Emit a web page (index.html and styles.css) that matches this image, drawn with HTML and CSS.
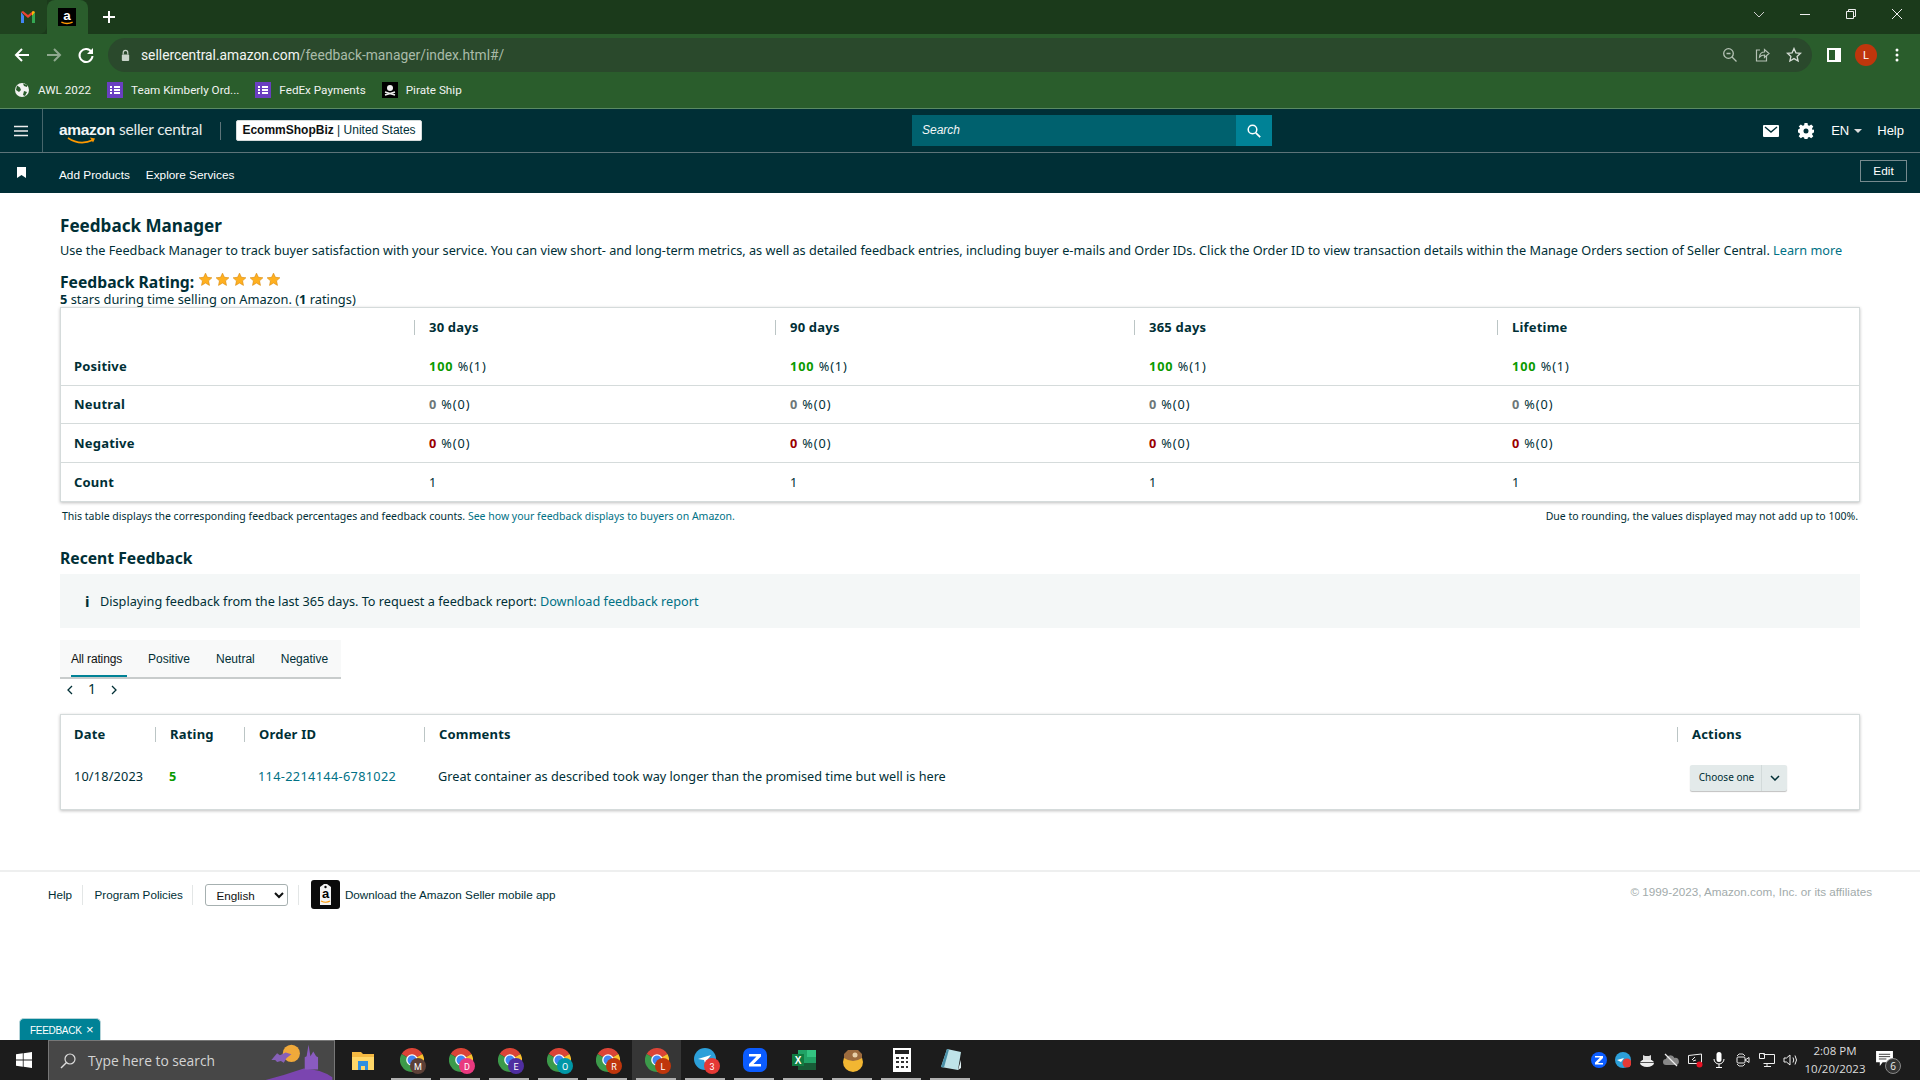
FILE: index.html
```html
<!DOCTYPE html>
<html lang="en">
<head>
<meta charset="utf-8">
<title>Feedback Manager</title>
<link rel="stylesheet" href="styles.css">
</head>
<body>
<svg class="defs" width="0" height="0">
  <symbol id="chrome" viewBox="0 0 24 24">
    <path d="M12 12L1.6 6A12 12 0 0 1 22.4 6Z" fill="#db4437"/>
    <path d="M12 12L22.4 6A12 12 0 0 1 12 24Z" fill="#fbc02d"/>
    <path d="M12 12L12 24A12 12 0 0 1 1.6 6Z" fill="#3c9a4a"/>
    <circle cx="12" cy="12" r="5.8" fill="#fff"/>
    <circle cx="12" cy="12" r="4.5" fill="#4285f4"/>
  </symbol>
  <symbol id="listicon" viewBox="0 0 16 16">
    <rect width="16" height="16" fill="#6a3fc0"/>
    <path d="M3 4h2v2H3zM7 4h6v2H7zM3 7h2v2H3zM7 7h6v2H7zM3 10h2v2H3zM7 10h6v2H7z" fill="#fff"/>
  </symbol>
  <symbol id="star" viewBox="-2 -1 24 22">
    <path d="M10 1l2.7 5.900 6.300.7-4.700 4.300 1.300 6.400L10 15l-5.600 3.300 1.300-6.400L1 7.600l6.300-.7z" fill="#ffb01f" stroke="#d98a10" stroke-width=".9"/>
  </symbol>
</svg>

<div class="tabbar">
  <div class="tab-inactive">
    <svg class="ico16" viewBox="0 0 16 16"><path d="M1 3v11h3V7z" fill="#4285f4"/><path d="M15 3v11h-3V7z" fill="#34a853"/><path d="M1 3l7 6 7-6-2-1-5 4-5-4z" fill="#ea4335"/><path d="M12 7l3-4-2-1-1 1z" fill="#fbbc04"/></svg>
  </div>
  <div class="tab-active">
    <svg class="ico16" viewBox="0 0 16 16"><rect width="16" height="16" fill="#000"/><text x="8" y="10.500" class="fav-a">a</text><path d="M3 12.500q5 2.500 10 0" fill="none" stroke="#f90" stroke-width="1.200"/></svg>
  </div>
  <div class="tab-plus">
    <svg class="ico14" viewBox="0 0 14 14"><path d="M7 1v12M1 7h12" stroke="#fff" stroke-width="2"/></svg>
  </div>
  <div class="win-controls">
    <svg class="ico12" viewBox="0 0 12 12"><path d="M1 4l5 5 5-5" fill="none" stroke="#ccc"/></svg>
    <svg class="ico12" viewBox="0 0 12 12"><path d="M1 6.500h10" stroke="#eee"/></svg>
    <svg class="ico12" viewBox="0 0 12 12"><path d="M1.500 3.500h7v7h-7zM3.500 3.500v-2h7v7h-2" fill="none" stroke="#eee"/></svg>
    <svg class="ico12" viewBox="0 0 12 12"><path d="M1 1l10 10M11 1L1 11" stroke="#eee"/></svg>
  </div>
</div>

<div class="toolbar">
  <svg class="tool-btn" viewBox="0 0 18 18"><path d="M16 9H3M9 3L3 9l6 6" fill="none" stroke="#fff" stroke-width="2"/></svg>
  <svg class="tool-btn" viewBox="0 0 18 18"><path d="M2 9h13M9 3l6 6-6 6" fill="none" stroke="#8fa98f" stroke-width="2"/></svg>
  <svg class="tool-btn" viewBox="0 0 18 18"><path d="M14.500 6A6.500 6.500 0 1 0 15.500 10" fill="none" stroke="#fff" stroke-width="2"/><path d="M16 2v6h-6z" fill="#fff"/></svg>
  <div class="omnibox">
    <svg class="lock" viewBox="0 0 12 14"><path d="M3.500 6V4a2.500 2.500 0 0 1 5 0v2" fill="none" stroke="#c9d3c9" stroke-width="1.300"/><rect x="2" y="6" width="8" height="7" rx="1" fill="#c9d3c9"/></svg>
    <span class="url"><span class="url-host">sellercentral.amazon.com</span>/feedback-manager/index.html#/</span>
    <div class="omni-icons">
      <svg class="ico16" viewBox="0 0 16 16"><circle cx="6.500" cy="6.500" r="4.800" fill="none" stroke="#b5c2b5" stroke-width="1.300"/><path d="M10 10l4.500 4.500M4.500 6.500h4" stroke="#b5c2b5" stroke-width="1.300"/></svg>
      <svg class="ico16" viewBox="0 0 16 16"><path d="M6 3H2.500v11h10V9" fill="none" stroke="#b5c2b5" stroke-width="1.200"/><path d="M5.500 10q.5-5 5-5V2.500L15 6.500l-4.500 4V8q-3 0-5 2z" fill="none" stroke="#b5c2b5" stroke-width="1.200"/></svg>
      <svg class="ico16" viewBox="0 0 16 16"><path d="M8 1.500l1.900 4.300 4.600.5-3.400 3.100 1 4.600L8 11.600l-4.100 2.400 1-4.600L1.500 6.300l4.600-.5z" fill="none" stroke="#d5ddd5" stroke-width="1.300"/></svg>
    </div>
  </div>
  <div class="tool-right">
    <svg class="ico16" viewBox="0 0 16 16"><rect x="1" y="1" width="14" height="14" fill="#fff"/><rect x="3" y="3" width="6" height="10" fill="#2a5d2c"/></svg>
    <span class="avatar">L</span>
    <svg class="ico16" viewBox="0 0 16 16"><circle cx="8" cy="3" r="1.500" fill="#fff"/><circle cx="8" cy="8" r="1.500" fill="#fff"/><circle cx="8" cy="13" r="1.500" fill="#fff"/></svg>
  </div>
</div>

<div class="bookmarks">
  <span class="bm"><svg class="ico16" viewBox="0 0 16 16"><circle cx="8" cy="8" r="7" fill="#f1f1f1"/><path d="M3 3.500l3 2 1 2.500-2 2-3-2zM9 1.500l1 2.500 3 1v-2zM10 9l3 1-2 4-2-1z" fill="#2a5d2c"/></svg>AWL 2022</span>
  <span class="bm"><svg class="ico16"><use href="#listicon"/></svg>Team Kimberly Ord...</span>
  <span class="bm"><svg class="ico16"><use href="#listicon"/></svg>FedEx Payments</span>
  <span class="bm"><svg class="ico16" viewBox="0 0 16 16"><rect width="16" height="16" fill="#000"/><circle cx="8" cy="6" r="3" fill="#eee"/><path d="M3 10l10 3M13 10L3 13" stroke="#eee" stroke-width="1.500"/></svg>Pirate Ship</span>
</div>

<header class="sc-header">
  <div class="burger-cell">
    <svg class="ico14" viewBox="0 0 14 14"><path d="M0 2.500h14M0 7h14M0 11.500h14" stroke="#eee" stroke-width="1.600"/></svg>
  </div>
  <div class="logo">
    <span class="logo-amazon">amazon</span>
    <span class="logo-sc">seller central</span>
    <svg class="logo-smile" viewBox="0 0 30 8"><path d="M1 1q12 8 25 2" fill="none" stroke="#f90" stroke-width="1.600"/><path d="M23 .5l5 1-2 4z" fill="#f90"/></svg>
  </div>
  <div class="vsep"></div>
  <div class="acct-badge"><b>EcommShopBiz</b> | United States</div>
  <div class="hdr-search">
    <span class="hdr-search-input">Search</span>
    <span class="hdr-search-btn"><svg class="ico14" viewBox="0 0 14 14"><circle cx="5.500" cy="5.500" r="4.300" fill="none" stroke="#fff" stroke-width="1.500"/><path d="M8.800 8.800l4.400 4.400" stroke="#fff" stroke-width="1.700"/></svg></span>
  </div>
  <div class="hdr-right">
    <svg class="ico16" viewBox="0 0 16 16"><rect y="2" width="16" height="12" rx="1" fill="#fff"/><path d="M2 4l6 5 6-5" fill="none" stroke="#002f36" stroke-width="1.400"/></svg>
    <svg class="ico16" viewBox="0 0 16 16"><path d="M8 5.500A2.500 2.500 0 1 0 8 10.500 2.500 2.500 0 1 0 8 5.500ZM6.500 0h3l.4 2.200 1.400.6L13.200 1.500l2.100 2.100L14 5.500l.6 1.400L16 6.500v3l-1.400.4-.6 1.400 1.300 1.900-2.100 2.100-1.900-1.300-1.400.6L9.500 16h-3l-.4-1.400-1.400-.6-1.900 1.300-2.100-2.100L2 11.300l-.6-1.400L0 9.500v-3l1.400-.4.600-1.400L.700 3.600 2.800 1.500l1.900 1.300 1.400-.6z" fill="#fff" fill-rule="evenodd"/></svg>
    <span class="lang">EN<i class="caret"></i></span>
    <span class="hdr-help">Help</span>
  </div>
</header>

<nav class="sc-nav">
  <svg class="nav-flag" viewBox="0 0 9 11"><path d="M0 0h9v11L4.500 8 0 11z" fill="#fff"/></svg>
  <a class="nav-link">Add Products</a>
  <a class="nav-link">Explore Services</a>
  <span class="nav-edit">Edit</span>
</nav>

<main class="page">
  <h1 class="title">Feedback Manager</h1>
  <p class="intro">Use the Feedback Manager to track buyer satisfaction with your service. You can view short- and long-term metrics, as well as detailed feedback entries, including buyer e-mails and Order IDs. Click the Order ID to view transaction details within the Manage Orders section of Seller Central. <a class="link">Learn more</a></p>
  <h2 class="rating-title">Feedback Rating:<span class="stars"><svg class="star"><use href="#star"/></svg><svg class="star"><use href="#star"/></svg><svg class="star"><use href="#star"/></svg><svg class="star"><use href="#star"/></svg><svg class="star"><use href="#star"/></svg></span></h2>
  <p class="rating-sub"><b>5</b> stars during time selling on Amazon. (<b>1</b> ratings)</p>

  <div class="card">
    <table class="tbl tbl-metrics">
      <thead><tr><th></th><th><span>30 days</span></th><th><span>90 days</span></th><th><span>365 days</span></th><th><span>Lifetime</span></th></tr></thead>
      <tbody>
        <tr><th class="rowhead">Positive</th><td><b class="pos">100</b> %(1)</td><td><b class="pos">100</b> %(1)</td><td><b class="pos">100</b> %(1)</td><td><b class="pos">100</b> %(1)</td></tr>
        <tr><th class="rowhead">Neutral</th><td><b class="neu">0</b> %(0)</td><td><b class="neu">0</b> %(0)</td><td><b class="neu">0</b> %(0)</td><td><b class="neu">0</b> %(0)</td></tr>
        <tr><th class="rowhead">Negative</th><td><b class="neg">0</b> %(0)</td><td><b class="neg">0</b> %(0)</td><td><b class="neg">0</b> %(0)</td><td><b class="neg">0</b> %(0)</td></tr>
        <tr><th class="rowhead">Count</th><td>1</td><td>1</td><td>1</td><td>1</td></tr>
      </tbody>
    </table>
  </div>
  <div class="table-note">
    <span>This table displays the corresponding feedback percentages and feedback counts. <a class="link">See how your feedback displays to buyers on Amazon.</a></span>
    <span>Due to rounding, the values displayed may not add up to 100%.</span>
  </div>

  <h2 class="recent-title">Recent Feedback</h2>
  <div class="info-box"><i class="info-i">i</i>Displaying feedback from the last 365 days. To request a feedback report:&nbsp;<a class="link">Download feedback report</a></div>

  <div class="tabs">
    <span class="tab tab-on">All ratings</span>
    <span class="tab">Positive</span>
    <span class="tab">Neutral</span>
    <span class="tab">Negative</span>
  </div>
  <div class="pager">
    <svg class="chev" viewBox="0 0 8 10"><path d="M6 1L2 5l4 4" fill="none" stroke="#002f36" stroke-width="1.300"/></svg>
    <span class="pager-num">1</span>
    <svg class="chev" viewBox="0 0 8 10"><path d="M2 1l4 4-4 4" fill="none" stroke="#002f36" stroke-width="1.300"/></svg>
  </div>

  <div class="card">
    <table class="tbl tbl-recent">
      <thead><tr><th class="first">Date</th><th><span>Rating</span></th><th><span>Order ID</span></th><th><span>Comments</span></th><th><span>Actions</span></th></tr></thead>
      <tbody>
        <tr>
          <td class="first date-cell">10/18/2023</td>
          <td class="rating-cell"><b class="pos">5</b></td>
          <td><a class="link order-id">114-2214144-6781022</a></td>
          <td>Great container as described took way longer than the promised time but well is here</td>
          <td class="action-cell"><span class="choose"><span class="choose-label">Choose one</span><span class="choose-arrow"><svg class="chev-d" viewBox="0 0 10 6"><path d="M1 1l4 4 4-4" fill="none" stroke="#002f36" stroke-width="1.500"/></svg></span></span></td>
        </tr>
      </tbody>
    </table>
  </div>
</main>

<footer class="sc-footer">
  <a class="foot-link">Help</a>
  <span class="foot-sep"></span>
  <a class="foot-link">Program Policies</a>
  <span class="foot-sep"></span>
  <select class="foot-select"><option>English</option></select>
  <span class="foot-sep"></span>
  <span class="foot-app"><svg class="app-icon" viewBox="0 0 29 29"><rect width="29" height="29" rx="3" fill="#0b0b0b"/><path d="M9 7l4-3h3l4 3v18H9z" fill="#f4f4f4"/><circle cx="14.500" cy="7" r="1.200" fill="#0b0b0b"/><text x="14.500" y="18" class="app-a">a</text><path d="M10 21q5 2.500 9 0" fill="none" stroke="#f90" stroke-width="1.100"/></svg>Download the Amazon Seller mobile app</span>
  <span class="copyright">© 1999-2023, Amazon.com, Inc. or its affiliates</span>
</footer>

<div class="feedback-tab">FEEDBACK <span class="feedback-x">×</span></div>

<div class="taskbar">
  <div class="start"><svg class="ico16" viewBox="0 0 16 16"><path d="M0 2.300l6.800-1v6.200H0zM7.600 1.200L16 0v7.500H7.600zM0 8.400h6.800v6.300L0 13.700zM7.600 8.400H16V16l-8.400-1.200z" fill="#fff"/></svg></div>
  <div class="win-search">
    <svg class="ico16" viewBox="0 0 16 16"><circle cx="10" cy="6" r="5" fill="none" stroke="#ddd" stroke-width="1.200"/><path d="M6.500 9.500L1 15" stroke="#ddd" stroke-width="1.400"/></svg>
    <span class="win-search-text">Type here to search</span>
    <svg class="halloween" viewBox="0 0 70 42"><path d="M0 42Q20 37 40 30Q58 31 70 39V42z" fill="#7b45b0"/><path d="M41 31V18l2-1 2-12 2 12 3-5 3 5 2 1v13z" fill="#8a5bc0"/><circle cx="27" cy="14" r="9" fill="#f0a93a"/><path d="M6 21l6-7 3 2 6-3 6 2-5 4-3 5-3-2-4 1-2-2z" fill="#8660b8"/></svg>
  </div>
  <div class="tb-apps">
    <span class="tb-app"><svg class="tb-ico" viewBox="0 0 24 24"><path d="M1 4h9l2 2h11v16H1z" fill="#f4b942"/><path d="M1 9h22v13H1z" fill="#ffd768"/><path d="M7 13h10v9h-3v-4h-4v4H7z" fill="#2f8fe0"/></svg></span>
    <span class="tb-app tb-run"><svg class="tb-ico tb-over"><use href="#chrome"/><circle cx="18" cy="18" r="8" fill="#5d4037"/><text x="18" y="21.500" class="tb-badge">M</text></svg></span>
    <span class="tb-app tb-run"><svg class="tb-ico tb-over"><use href="#chrome"/><circle cx="18" cy="18" r="8" fill="#e9397f"/><text x="18" y="21.500" class="tb-badge">D</text></svg></span>
    <span class="tb-app tb-run"><svg class="tb-ico tb-over"><use href="#chrome"/><circle cx="18" cy="18" r="8" fill="#4f2ea0"/><text x="18" y="21.500" class="tb-badge">E</text></svg></span>
    <span class="tb-app tb-run"><svg class="tb-ico tb-over"><use href="#chrome"/><circle cx="18" cy="18" r="8" fill="#0097a7"/><text x="18" y="21.500" class="tb-badge">O</text></svg></span>
    <span class="tb-app tb-run"><svg class="tb-ico tb-over"><use href="#chrome"/><circle cx="18" cy="18" r="8" fill="#bf360c"/><text x="18" y="21.500" class="tb-badge">R</text></svg></span>
    <span class="tb-app tb-run tb-active"><svg class="tb-ico tb-over"><use href="#chrome"/><circle cx="18" cy="18" r="8" fill="#bf360c"/><text x="18" y="21.500" class="tb-badge">L</text></svg></span>
    <span class="tb-app tb-run"><svg class="tb-ico tb-over" viewBox="0 0 24 24"><circle cx="11" cy="11" r="11" fill="#2c9fd9"/><path d="M4 11l13-4-6 8-1-3z" fill="#fff"/><circle cx="18" cy="18" r="8" fill="#e53935"/><text x="18" y="21.500" class="tb-badge">3</text></svg></span>
    <span class="tb-app tb-run"><svg class="tb-ico" viewBox="0 0 24 24"><rect width="24" height="24" rx="7" fill="#0b5cff"/><path d="M6 6h12v2.500L10.500 16H18v2.500H6V16l7.500-7.500H6z" fill="#fff"/></svg></span>
    <span class="tb-app tb-run"><svg class="tb-ico" viewBox="0 0 24 24"><rect x="6" y="2" width="18" height="20" fill="#21a366"/><rect x="15" y="2" width="9" height="7" fill="#33c481"/><rect x="6" y="15" width="18" height="7" fill="#185c37"/><rect y="6" width="12" height="12" fill="#107c41"/><text x="6" y="15.500" class="tb-x">X</text></svg></span>
    <span class="tb-app tb-run"><svg class="tb-ico" viewBox="0 0 24 24"><circle cx="12" cy="14" r="10" fill="#f2b632"/><path d="M3 10q9 6 18 0V6L17 2H7L3 6z" fill="#9c6b3e"/><circle cx="14" cy="7" r="2.500" fill="#e8d0a9"/></svg></span>
    <span class="tb-app tb-run"><svg class="tb-ico" viewBox="0 0 24 24"><rect x="3" width="18" height="24" fill="#fff"/><rect x="5" y="2" width="14" height="4" fill="#222"/><path d="M6 9h3v2H6zM11 9h3v2h-3zM16 9h2v2h-2zM6 13h3v2H6zM11 13h3v2h-3zM16 13h2v2h-2zM6 18h3v2H6zM11 18h3v2h-3zM16 18h2v2h-2z" fill="#333"/></svg></span>
    <span class="tb-app tb-run"><svg class="tb-ico" viewBox="0 0 24 24"><path d="M8 1l14 3-3 18L2 19z" fill="#bfe3e8"/><path d="M2 19l6-18 2 .5-5 18z" fill="#4a90a8"/><path d="M19 22l3-10v8z" fill="#dfeff2"/></svg></span>
  </div>
  <div class="tray">
    <svg class="tr-ico" viewBox="0 0 16 16"><circle cx="8" cy="8" r="8" fill="#0b5cff"/><path d="M4 4h8v2L7 11h5v1.500H4v-2l5-5H4z" fill="#fff"/></svg>
    <svg class="tr-ico" viewBox="0 0 16 16"><circle cx="8" cy="8" r="8" fill="#2c9fd9"/><path d="M2 8l7-2-3 4z" fill="#fff"/><circle cx="12" cy="11" r="4.500" fill="#e53935"/></svg>
    <svg class="tr-ico" viewBox="0 0 16 16"><ellipse cx="8" cy="11" rx="7" ry="4" fill="#eee"/><path d="M4 8V3l2 1h4l2-1v5z" fill="#ddd"/><path d="M1 10.500h14" stroke="#555"/></svg>
    <svg class="tr-ico" viewBox="0 0 16 16"><path d="M3 13a3 3 0 0 1 0-6 4.500 4.500 0 0 1 8.500-1A3.500 3.500 0 0 1 13 13z" fill="#888"/><path d="M2 2l12 12" stroke="#eee" stroke-width="1.200"/></svg>
    <svg class="tr-ico" viewBox="0 0 16 16"><path d="M1.500 3.500l13-1.500v9.500h-13z" fill="none" stroke="#eee"/><path d="M5 8l3-3M6 9l3-1" stroke="#eee"/><circle cx="12.500" cy="12.500" r="3" fill="#e81123"/></svg>
    <svg class="tr-ico" viewBox="0 0 16 16"><rect x="5.500" y="0" width="5" height="10" rx="2.500" fill="#fff"/><path d="M3 7a5 5 0 0 0 10 0M8 12v3M5 15.500h6" fill="none" stroke="#fff"/></svg>
    <svg class="tr-ico" viewBox="0 0 16 16"><path d="M2 4l2-2h4l2 2M2 12l2 2h4l2-2" fill="none" stroke="#ddd"/><rect x="2" y="5" width="8" height="6" rx="1" fill="none" stroke="#eee"/><path d="M10 8l4-2.500v5z" fill="none" stroke="#eee"/></svg>
    <svg class="tr-ico" viewBox="0 0 16 16"><path d="M4.500 2.500h11v9h-11M8 11.500v3M5 14.500h7M.5 1.500h5v5h-5z" fill="none" stroke="#eee"/></svg>
    <svg class="tr-ico" viewBox="0 0 16 16"><path d="M1 6v4h2.500L7 13V3L3.500 6zM10 5.500q1.500 2.500 0 5M12 3.500q3 4.500 0 9" fill="none" stroke="#eee"/></svg>
    <div class="clock"><span>2:08 PM</span><span>10/20/2023</span></div>
    <div class="notif"><svg class="notif-ico" viewBox="0 0 18 16"><path d="M0 0h18v12H7l-3 4v-4H0z" fill="#fff"/><path d="M3 3.500h12M3 6h12M3 8.500h8" stroke="#333"/></svg><span class="notif-count">6</span></div>
  </div>
</div>
</body>
</html>
```

FILE: styles.css
```css
* { box-sizing: border-box; }
html, body { margin: 0; padding: 0; }
body {
  width: 1920px; height: 1080px; overflow: hidden;
  display: flex; flex-direction: column; position: relative;
  background: #fff; color: #0f1111;
  font-family: "Noto Sans", "Open Sans", sans-serif; font-size: 13px;
}
.defs { position: absolute; }
svg { display: block; flex: none; }
.ico16 { width: 16px; height: 16px; }
.ico14 { width: 14px; height: 14px; }
.ico12 { width: 12px; height: 12px; }

/* browser chrome */
.tabbar { height: 34px; flex: none; background: #1b3a1b; display: flex; align-items: stretch; }
.tab-inactive { width: 47px; display: flex; align-items: center; justify-content: center; padding-left: 9px; background: #1f431f; border-bottom-right-radius: 8px; }
.tab-active { width: 41px; background: #2a5d2c; border-radius: 8px 8px 0 0; display: flex; align-items: center; justify-content: center; padding-right: 2px; }
.tab-active .ico16 { width: 18px; height: 18px; }
.fav-a { font: bold 12px "Liberation Sans", sans-serif; fill: #fff; text-anchor: middle; }
.tab-plus { width: 42px; display: flex; align-items: center; justify-content: center; }
.win-controls { margin-left: auto; display: flex; align-items: center; gap: 34px; padding-right: 17px; padding-bottom: 6px; }
.toolbar { height: 38px; flex: none; background: #2a5d2c; display: flex; align-items: center; padding-left: 13px; padding-top: 4px; }
.tool-btn { width: 18px; height: 18px; margin-right: 14px; }
.omnibox { margin-left: -1px; width: 1704px; height: 34px; border-radius: 17px; background: #2a492c; display: flex; align-items: center; padding-left: 12px; }
.lock { width: 11px; height: 13px; }
.url { margin-left: 10px; font: 13.800px "Roboto", sans-serif; color: #a9bba9; }
.url-host { color: #f2f5f2; }
.omni-icons { margin-left: auto; display: flex; gap: 16px; padding-right: 10px; align-items: center; }
.tool-right { display: flex; align-items: center; margin-left: 14px; gap: 16px; }
.avatar { width: 22px; height: 22px; border-radius: 50%; background: #bf360c; color: #fff; font: 11px "Roboto", sans-serif; display: flex; align-items: center; justify-content: center; margin-left: -3px; margin-right: -4px; }
.bookmarks { height: 36px; flex: none; background: #2a5d2c; display: flex; align-items: center; padding-left: 14px; gap: 16px; color: #f0f3f0; font: 11.700px "Roboto", sans-serif; }
.bm { display: flex; align-items: center; gap: 8px; }

/* seller central header */
.sc-header { height: 45px; flex: none; background: #002f36; border-top: 1px solid #5b8a63; border-bottom: 1px solid #5d7479; display: flex; align-items: center; color: #fff; font-family: "Liberation Sans", sans-serif; }
.burger-cell { width: 43px; height: 100%; border-right: 1px solid #47666b; display: flex; align-items: center; justify-content: center; }
.logo { margin-left: 16px; width: 145px; height: 30px; display: flex; align-items: baseline; gap: 4px; position: relative; line-height: 26px; color: #f4f7f7; white-space: nowrap; }
.logo-amazon { font: bold 15.500px/26px "Liberation Sans", sans-serif; letter-spacing: -.3px; }
.logo-sc { font: 15.500px/26px "Lato", sans-serif; letter-spacing: -.2px; color: #e6ecec; }
.logo-smile { position: absolute; left: 8px; top: 21px; width: 30px; height: 8px; }
.vsep { width: 1px; height: 18px; background: #5d7479; margin-left: 16px; }
.acct-badge { margin-left: 15px; width: 186px; height: 21px; background: #fff; border: 1px solid #d5dbdb; border-radius: 2px; color: #002f36; font-size: 12px; line-height: 19px; text-align: center; white-space: nowrap; }
.acct-badge b { color: #0f1111; }
.hdr-search { margin-left: 490px; width: 360px; height: 31px; display: flex; background: #00616e; }
.hdr-search-input { flex: 1; font: italic 12px/31px "Liberation Sans", sans-serif; color: #f4f7f7; padding-left: 10px; }
.hdr-search-btn { width: 36px; background: #008296; display: flex; align-items: center; justify-content: center; }
.hdr-right { margin-left: auto; display: flex; align-items: center; padding-right: 16px; font-size: 13px; }
.hdr-right .ico16:first-child { margin-right: 19px; }
.lang { margin-left: 17px; display: flex; align-items: center; gap: 5px; }
.caret { border-left: 4px solid transparent; border-right: 4px solid transparent; border-top: 4px solid #ddd; }
.hdr-help { margin-left: 15px; }

.sc-nav { height: 40px; flex: none; background: #002f36; display: flex; align-items: center; padding-left: 17px; color: #fff; font: 11.800px "Liberation Sans", sans-serif; }
.nav-flag { width: 9px; height: 11px; margin-right: 33px; margin-top: -2px; }
.nav-link { margin-right: 16px; margin-top: 3px; }
.nav-edit { margin-left: auto; margin-right: 13px; margin-top: -4px; width: 47px; height: 22px; border: 1px solid #768a8e; line-height: 20px; text-align: center; }

/* page */
.page { flex: none; height: 677px; padding: 0 60px; }
.title { margin: 0; padding-top: 21px; font-size: 17.100px; line-height: 24px; color: #002f36; font-weight: 700; }
.intro { margin: 3px 0 0; font-size: 12.700px; line-height: 18px; white-space: nowrap; color: #002f36; }
.link { color: #007185; text-decoration: none; }
.rating-title { margin: 13px 0 0; font-size: 15.700px; line-height: 20px; color: #002f36; display: flex; align-items: flex-start; }
.stars { display: flex; margin-left: 3px; margin-top: -1px; }
.star { width: 17px; height: 17px; }
.rating-sub { margin: 0; font-size: 12.850px; line-height: 15px; color: #002f36; }
.card { border: 1px solid #d5dbdb; box-shadow: 0 1px 3px rgba(0, 0, 0, .25); }
.tbl { width: 100%; border-collapse: collapse; table-layout: fixed; font-size: 12.700px; color: #002f36; }
.tbl th, .tbl td { padding: 0; text-align: left; border-bottom: 1px solid #d5dbdb; }
.tbl tr:last-child td, .tbl tr:last-child th { border-bottom: 0; }
.tbl thead th { height: 38.600px; font-weight: 700; font-size: 13px; letter-spacing: .2px; }
.tbl thead th span { display: block; border-left: 1px solid #bbc5c5; padding-left: 14px; line-height: 15px; }
.tbl-metrics th:nth-child(1) { width: 353px; }
.tbl-metrics th:nth-child(2) { width: 361px; }
.tbl-metrics th:nth-child(3) { width: 359px; }
.tbl-metrics th:nth-child(4) { width: 363px; }
.tbl-metrics tbody tr { height: 38.600px; }
.tbl-metrics td { padding-left: 15px; letter-spacing: .9px; }
.rowhead { padding-left: 13px !important; font-weight: 700; font-size: 13px; letter-spacing: .2px; }
.pos { color: #0a9a00; }
.neu { color: #6c7778; }
.neg { color: #990000; }
.table-note { display: flex; justify-content: space-between; padding: 7px 2px 0; font-size: 10.500px; line-height: 14px; color: #002f36; }
.recent-title { margin: 24px 0 0; font-size: 15.700px; line-height: 22px; color: #002f36; }
.info-box { margin-top: 5px; height: 54px; background: #f4f7f7; display: flex; align-items: center; padding-left: 25px; font-size: 12.700px; color: #002f36; }
.info-i { font: bold 15px "Noto Sans", sans-serif; margin-right: 11px; width: 4px; }
.tabs { margin-top: 12px; width: 281px; height: 39px; background: #f8f9f9; border-bottom: 2px solid #c8cccc; display: flex; padding-left: 11px; font: 12px "Liberation Sans", sans-serif; color: #002f36; white-space: nowrap; }
.tab { flex: none; line-height: 38px; height: 37px; margin-right: 26px; }
.tab:last-child { margin-right: 0; }
.tab-on { width: 56px; border-bottom: 2px solid #008296; color: #0f1111; letter-spacing: -.15px; margin-right: 21px; }
.pager { height: 35px; display: flex; align-items: flex-start; padding: 2px 0 0 6px; }
.chev { width: 8px; height: 10px; margin-top: 4px; }
.pager-num { width: 36px; text-align: center; font: 14px/16px "Noto Sans", sans-serif; color: #002f36; }
.tbl-recent th:nth-child(1) { width: 94px; }
.tbl-recent th:nth-child(2) { width: 89px; }
.tbl-recent th:nth-child(3) { width: 180px; }
.tbl-recent th:nth-child(4) { width: 1253px; }
.tbl-recent .first { padding-left: 13px; }
.tbl-recent td { height: 55px; vertical-align: top; padding: 14px 0 0 14px; line-height: 17px; }
.tbl-recent td.first { padding-left: 13px; }
.date-cell { letter-spacing: .18px; }
.order-id { letter-spacing: .35px; }
.tbl-recent td.action-cell { padding: 11px 0 0 13px; }
.choose { display: flex; width: 97px; height: 26px; background: #e3eaea; border-radius: 2px; box-shadow: 0 1px 1px rgba(0, 0, 0, .25); font: 10px/25px "Noto Sans", sans-serif; color: #002f36; }
.choose-label { width: 72px; padding-left: 2px; text-align: center; border-right: 1px solid #d2dada; }
.choose-arrow { flex: 1; display: flex; align-items: center; justify-content: center; }
.chev-d { width: 10px; height: 6px; }

/* footer */
.sc-footer { flex: none; height: 170px; border-top: 2px solid #eeefef; display: flex; align-items: flex-start; padding: 11px 0 0 48px; font: 11.700px/24px "Liberation Sans", sans-serif; color: #002f36; }
.foot-sep { width: 1px; height: 20px; background: #e3e6e6; margin: 2px 12px 0 9.500px; }
.foot-select { width: 83px; height: 22px; margin-top: 1px; border: 1px solid #a6b0b0; border-radius: 3px; background: #fff; font: 11.700px "Liberation Sans", sans-serif; color: #0f1111; padding-left: 6px; }
.foot-app { display: flex; align-items: center; gap: 5px; margin-top: -3px; }
.app-icon { width: 29px; height: 29px; }
.app-a { font: bold 13px "Liberation Sans", sans-serif; fill: #000; text-anchor: middle; }
.copyright { margin-left: auto; margin-top: -3px; padding-right: 48px; color: #a2abab; }
.feedback-tab { position: absolute; left: 19px; top: 1018px; width: 82px; height: 22px; background: #008296; border: 1px solid #b5d4d9; border-bottom: 0; border-radius: 5px 5px 0 0; color: #fff; font: 10px/21px "Liberation Sans", sans-serif; letter-spacing: -.3px; padding-left: 10px; white-space: nowrap; }
.feedback-x { font-size: 13px; margin-left: 2px; }

/* taskbar */
.taskbar { height: 40px; flex: none; background: #1c1c1c; display: flex; color: #eee; }
.start { width: 48px; display: flex; align-items: center; justify-content: center; }
.win-search { width: 287px; background: #474747; border: 1px solid #777; border-bottom: 0; display: flex; align-items: center; padding-left: 11px; position: relative; overflow: hidden; }
.win-search-text { margin-left: 12px; font: 13.800px "Open Sans", sans-serif; color: #d4d4d4; }
.halloween { position: absolute; right: 0; bottom: 0; width: 70px; height: 40px; }
.tb-apps { display: flex; margin-left: 3px; }
.tb-app { width: 49px; height: 40px; display: flex; align-items: center; justify-content: center; position: relative; }
.tb-run::after { content: ""; position: absolute; left: 4px; right: 5px; bottom: 0; height: 2px; background: #b0b0b0; }
.tb-active { background: #363636; }
.tb-ico { width: 24px; height: 24px; }
.tb-over { overflow: visible; }
.tb-badge { font: 9px "Roboto", sans-serif; fill: #fff; text-anchor: middle; }
.tb-x { font: bold 10px "Liberation Sans", sans-serif; fill: #fff; text-anchor: middle; }
.tray { margin-left: auto; display: flex; align-items: center; padding-right: 20px; }
.tr-ico { width: 16px; height: 16px; margin-right: 8px; }
.clock { width: 60px; display: flex; flex-direction: column; align-items: center; margin-left: -2px; font: 11.500px/18px "Open Sans", sans-serif; color: #ddd; white-space: nowrap; }
.notif { margin-left: 11px; width: 24px; height: 28px; position: relative; }
.notif-ico { width: 17px; height: 15px; margin-top: 5px; }
.notif-count { position: absolute; left: 9px; top: 12px; width: 16px; height: 16px; border-radius: 50%; background: #333; border: 1px solid #888; color: #eee; font: 10px/14px "Open Sans", sans-serif; text-align: center; }
```
